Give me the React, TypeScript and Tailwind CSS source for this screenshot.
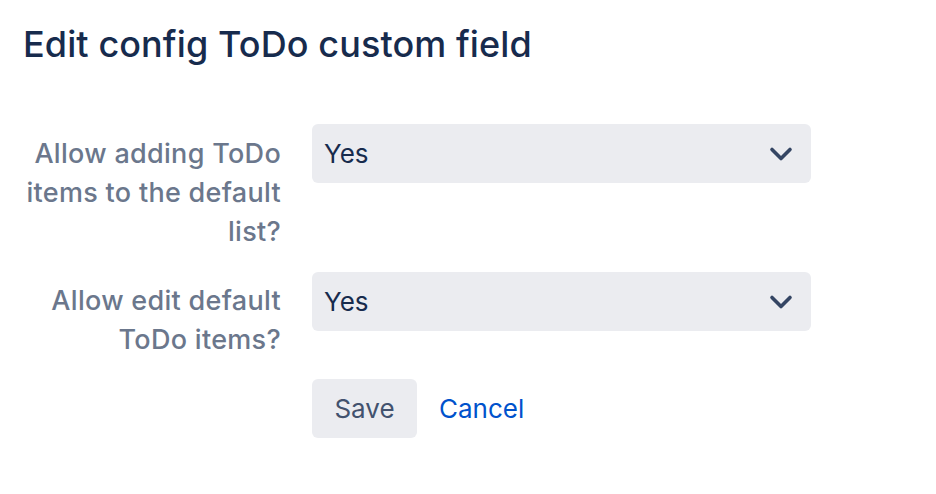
import React from "react";

function Chevron() {
  return (
    <svg width="24" height="16" viewBox="0 0 24 16" fill="none">
      <path d="M3 3.5l9 9 9-9" stroke="#344563" strokeWidth="3.6" strokeLinecap="round" strokeLinejoin="round" />
    </svg>
  );
}

function Select({ value }: { value: string }) {
  return (
    <div className="flex h-[59px] w-[499px] items-center justify-between rounded-[6px] bg-[#ebecf0] pl-[12px] pr-[18px]">
      <span className="text-[26px] text-[#172b4d]">{value}</span>
      <Chevron />
    </div>
  );
}

export default function App() {
  return (
    <div className="min-h-[494px] w-[936px] bg-white pl-[23px] pt-[20px]" style={{ fontFamily: "Inter, 'Noto Sans', sans-serif" }}>
      <h1 className="text-[36px] font-medium leading-[48px] tracking-[0.1px] text-[#172b4d]">Edit config ToDo custom field</h1>
      <div className="mt-[56px] flex flex-col">
        <div className="flex gap-[31px]">
          <div className="w-[258px] pt-[10px] text-right text-[27px] font-medium leading-[39px] tracking-[0.3px] text-[#6b778c]">
            Allow adding ToDo items to the default list?
          </div>
          <Select value="Yes" />
        </div>
        <div className="mt-[21px] flex gap-[31px]">
          <div className="w-[258px] pt-[9px] text-right text-[27px] font-medium leading-[39px] tracking-[0.3px] text-[#6b778c]">
            Allow edit default ToDo items?
          </div>
          <Select value="Yes" />
        </div>
        <div className="mt-[20px] flex items-center gap-[22px] pl-[289px]">
          <button className="h-[59px] w-[105px] rounded-[6px] bg-[#ebecf0] text-[26px] text-[#42526e]">Save</button>
          <span className="text-[26px] text-[#0052cc]">Cancel</span>
        </div>
      </div>
    </div>
  );
}
